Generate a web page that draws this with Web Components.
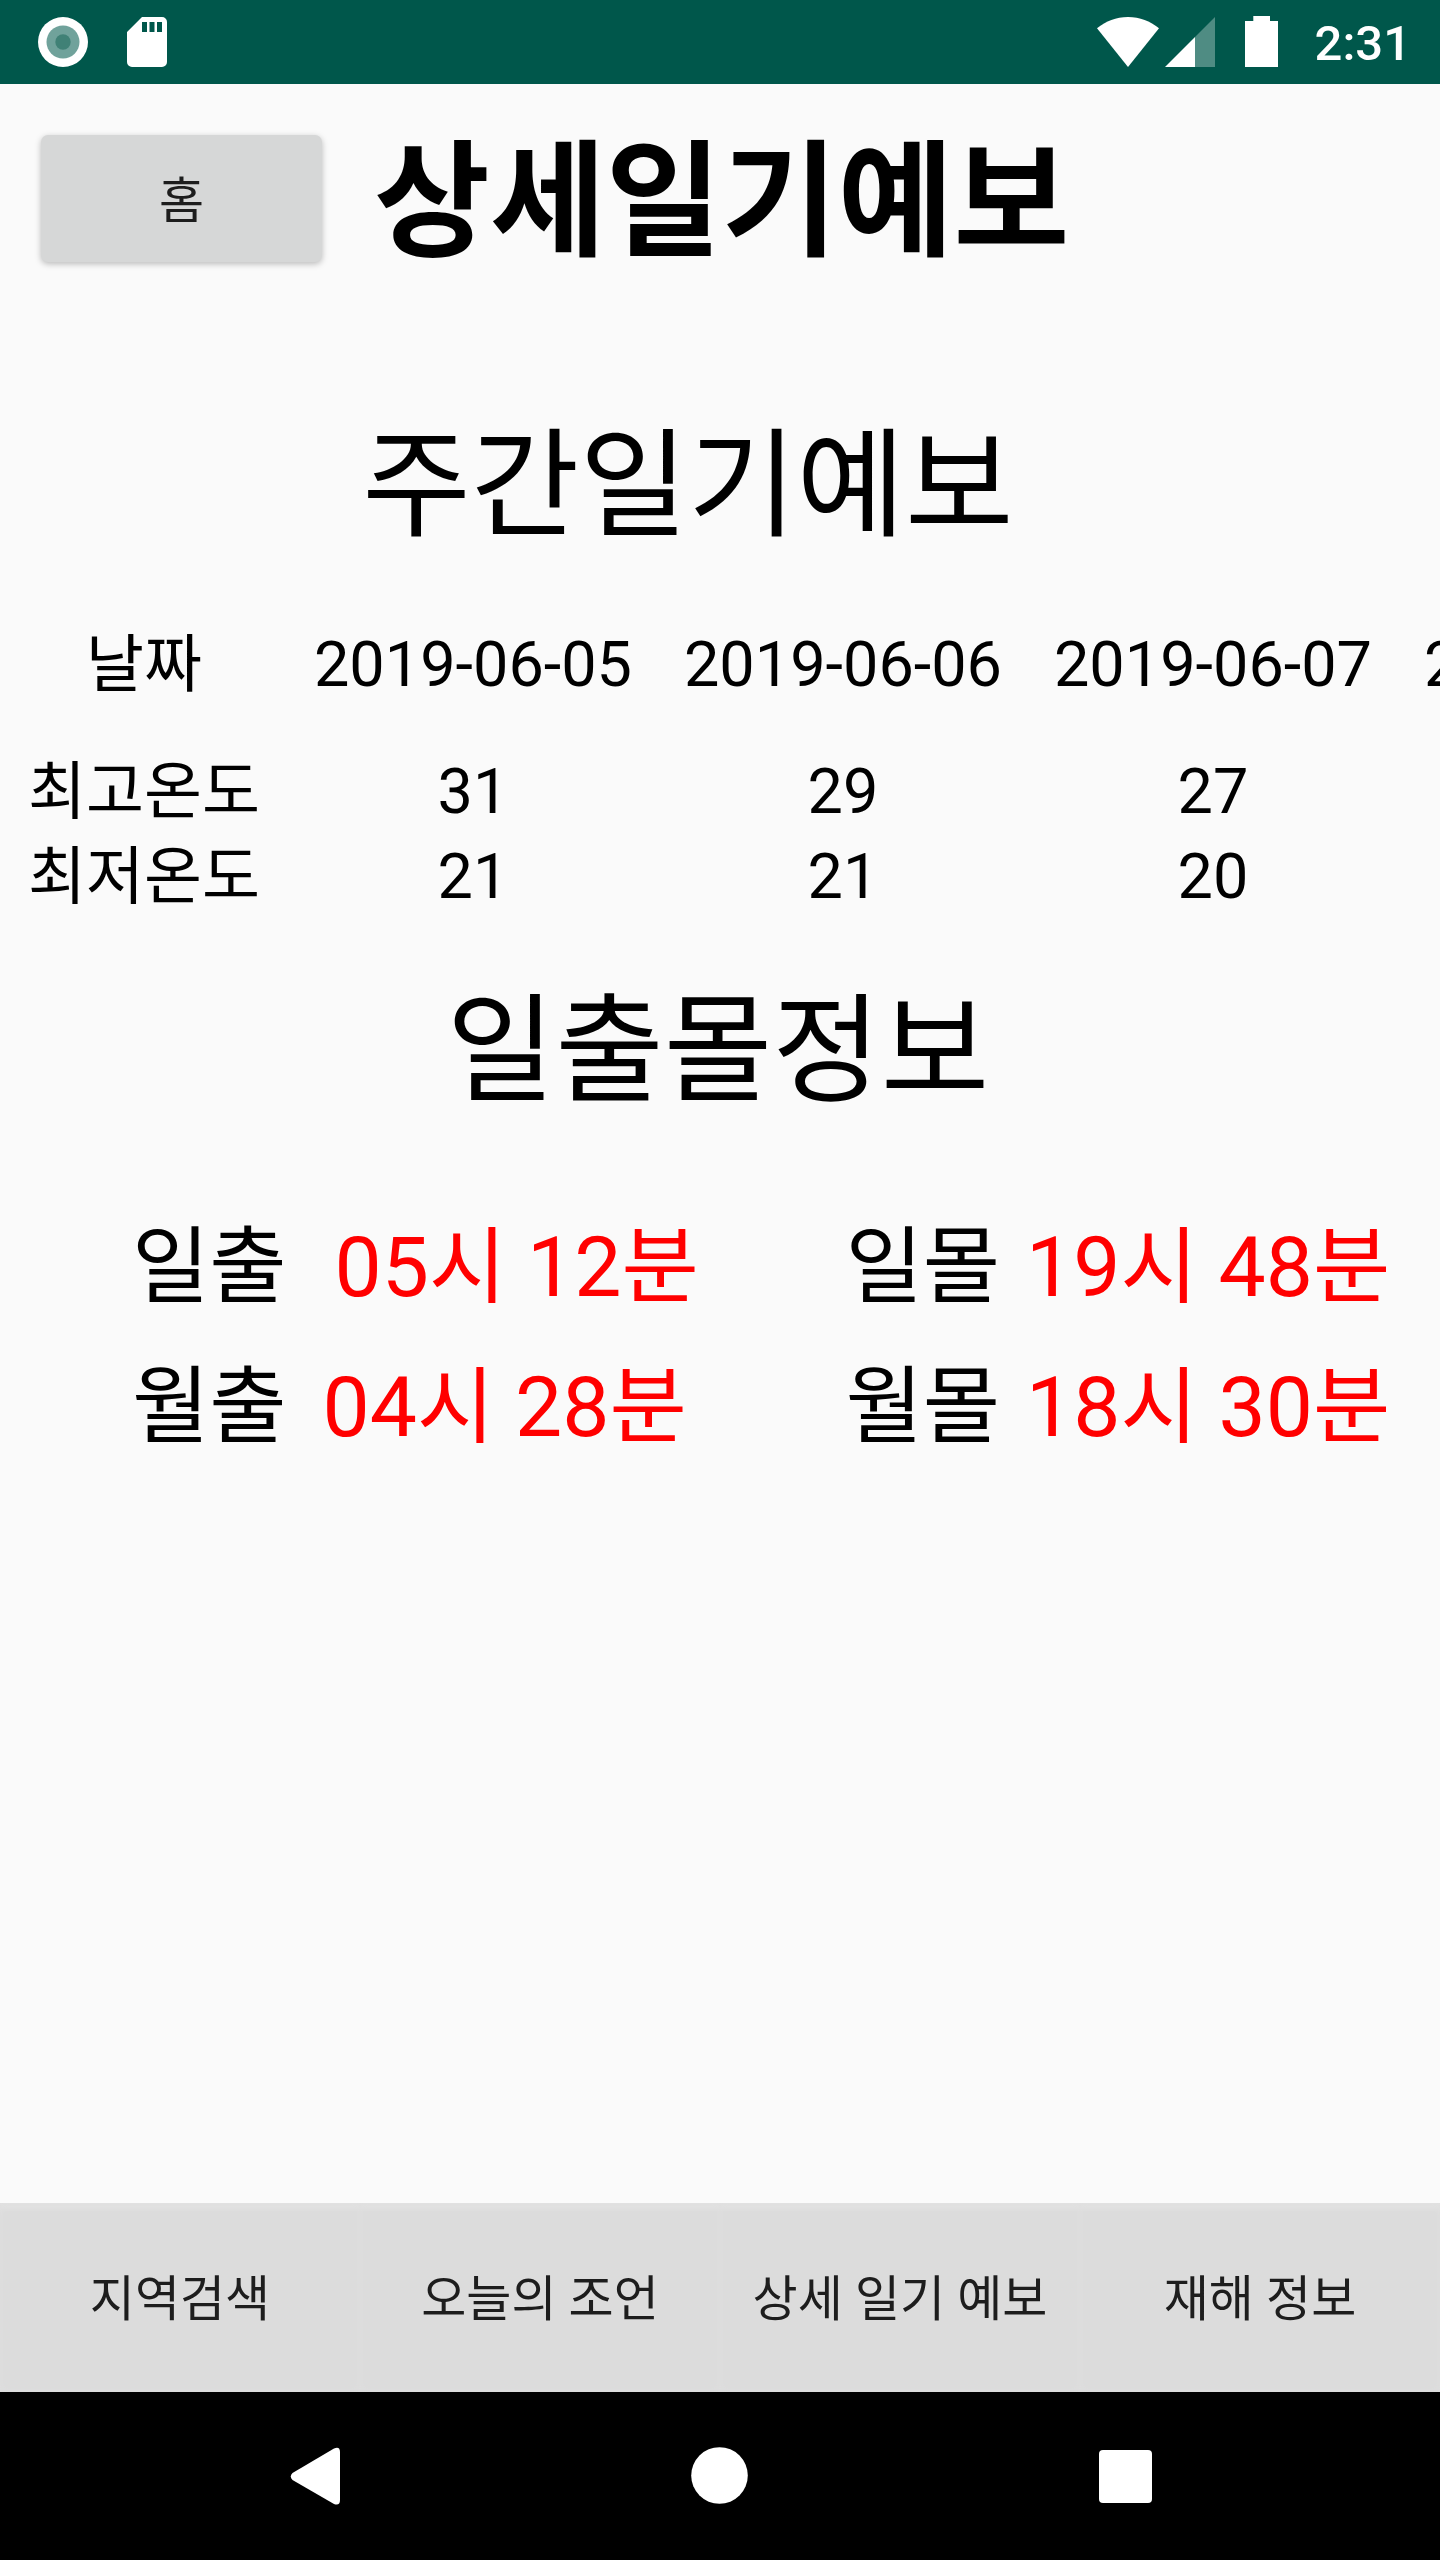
<!DOCTYPE html>
<html lang="ko">
<head>
<meta charset="utf-8">
<meta name="viewport" content="width=device-width, initial-scale=1">
<title>상세일기예보</title>
<style>
body { margin: 0; background: #fafafa; font-family: Roboto, "Noto Sans CJK KR", sans-serif; color: #000; }
</style>
</head>
<body>
<weather-app></weather-app>
<script>
const define = (name, html) => {
  const template = document.createElement('template');
  template.innerHTML = html;
  customElements.define(name, class extends HTMLElement {
    constructor() {
      super();
      this.attachShadow({ mode: 'open' }).append(template.content.cloneNode(true));
    }
  });
};

define('status-bar', `
<style>
:host { display: flex; justify-content: space-between; align-items: center; height: 84px; padding: 0 29px 0 38px; background: #00574b; color: #fff; }
.left, .right { display: flex; align-items: center; }
.left { gap: 39px; }
svg { display: block; }
.signal { margin-left: 6px; }
.battery { margin-left: 30px; }
time { margin-left: 37px; font-size: 49px; line-height: 58px; font-weight: 500; padding-top: 4px; }
</style>
<div class="left">
  <svg width="50" height="50" viewBox="0 0 50 50" aria-hidden="true"><circle cx="25" cy="25" r="25" fill="#fff"/><circle cx="25" cy="25" r="16.5" fill="#70a29b"/><circle cx="25" cy="25" r="7.7" fill="#408176"/></svg>
  <svg width="40" height="50" viewBox="0 0 40 50" aria-hidden="true"><path fill="#fff" fill-rule="evenodd" d="M15 0H35a5 5 0 0 1 5 5V45a5 5 0 0 1-5 5H5a5 5 0 0 1-5-5V15ZM15 5v10h5V5ZM22.500 5v10h5V5ZM30 5v10h5V5Z"/></svg>
</div>
<div class="right">
  <svg width="62" height="50" viewBox="0 0 62 50" aria-hidden="true"><path fill="#fff" d="M31 50 0 11.300C9 4 19 0 31 0s22 4 31 11.300Z"/></svg>
  <svg class="signal" width="50" height="50" viewBox="0 0 50 50" aria-hidden="true"><path fill="#4f8c83" d="M30 20 50 0V50H30Z"/><path fill="#fff" d="M0 50 30 20V50Z"/></svg>
  <svg class="battery" width="33" height="52" viewBox="0 0 33 52" aria-hidden="true"><path fill="#fff" d="M8.300 0H25V5h8V51H0V5H8.300Z"/></svg>
  <time>2:31</time>
</div>`);

define('home-button', `
<style>
:host { display: block; }
button { display: block; width: 281px; height: 127px; padding: 6px 0 0; border: 0; border-radius: 7px; background: #d6d7d7; color: #1d1d1d; font: inherit; font-size: 49px; line-height: 58px; box-shadow: 0 2px 6px rgba(0,0,0,.26); }
</style>
<button type="button"><slot></slot></button>`);

define('section-title', `
<style>
:host { display: block; }
h2 { margin: 0; font-size: 118px; line-height: 140px; font-weight: 400; text-align: center; }
</style>
<h2><slot></slot></h2>`);

define('weekly-forecast', `
<style>
:host { display: block; overflow: hidden; }
table { width: 1768px; table-layout: fixed; border-collapse: collapse; font-size: 63px; line-height: 85px; text-align: center; }
col.label { width: 288px; }
th, td { padding: 0; font-weight: 400; white-space: nowrap; }
thead th { padding-bottom: 42px; }
</style>
<table>
  <colgroup><col class="label"><col><col><col><col></colgroup>
  <thead><tr><th scope="col">날짜</th><th scope="col">2019-06-05</th><th scope="col">2019-06-06</th><th scope="col">2019-06-07</th><th scope="col">2019-06-08</th></tr></thead>
  <tbody>
    <tr><th scope="row">최고온도</th><td>31</td><td>29</td><td>27</td><td></td></tr>
    <tr><th scope="row">최저온도</th><td>21</td><td>21</td><td>20</td><td></td></tr>
  </tbody>
</table>`);

define('sky-time', `
<style>
:host { display: flex; gap: var(--gap, 26px); font-size: 84px; line-height: 140px; white-space: nowrap; }
.value { color: #f00; }
</style>
<span><slot name="label"></slot></span><span class="value"><slot></slot></span>`);

define('sky-times', `
<style>
:host { display: grid; grid-template-columns: 6fr 5fr; padding-left: 132px; }
.sunrise { --gap: 48px; }
.moonrise { --gap: 36px; }
</style>
<sky-time class="sunrise"><span slot="label">일출</span>05시 12분</sky-time>
<sky-time><span slot="label">일몰</span>19시 48분</sky-time>
<sky-time class="moonrise"><span slot="label">월출</span>04시 28분</sky-time>
<sky-time><span slot="label">월몰</span>18시 30분</sky-time>`);

define('tab-bar', `
<style>
:host { display: block; }
nav { display: grid; grid-template-columns: repeat(4, 1fr); height: 189px; background: #dcdcdc; box-shadow: inset 0 8px 6px -3px #e3e3e3; }
button { padding: 4px 0 0; border: 0; background: none; box-shadow: inset 0 0 6px #dfdfdf; color: #1d1d1d; font: inherit; font-size: 49px; line-height: 58px; white-space: nowrap; }
</style>
<nav>
  <button type="button">지역검색</button>
  <button type="button">오늘의 조언</button>
  <button type="button">상세 일기 예보</button>
  <button type="button">재해 정보</button>
</nav>`);

define('system-nav', `
<style>
:host { display: flex; height: 168px; padding: 0 111px; background: #000; }
button { flex: 1; display: flex; align-items: center; justify-content: center; padding: 0; border: 0; background: none; }
svg { fill: #fff; }
</style>
<button type="button" aria-label="뒤로"><svg width="58" height="58" viewBox="0 0 58 58"><path d="M7.500 26 49 1.500Q55 -1 55 5V53Q55 59 49 57L7.500 33Q4 29.500 7.500 26Z"/></svg></button>
<button type="button" aria-label="홈 화면"><svg width="58" height="58" viewBox="0 0 58 58"><circle cx="28.500" cy="28.500" r="28.300"/></svg></button>
<button type="button" aria-label="최근 앱"><svg width="58" height="58" viewBox="0 0 58 58"><rect x="2" y="3" width="53" height="53" rx="4"/></svg></button>`);

define('weather-app', `
<style>
:host { display: flex; flex-direction: column; min-height: 100vh; }
main { flex: 1; }
header { display: flex; align-items: flex-start; gap: 52px; padding: 51px 41px 0; }
h1 { margin: 0; padding-top: 5px; font-size: 126px; line-height: 127px; font-weight: 700; white-space: nowrap; }
.weekly { margin-top: 150px; padding-right: 64px; }
weekly-forecast { margin-top: 65px; }
.sky { margin-top: 63px; padding-right: 4px; }
sky-times { margin-top: 76px; }
</style>
<status-bar></status-bar>
<main>
  <header><home-button>홈</home-button><h1>상세일기예보</h1></header>
  <section-title class="weekly">주간일기예보</section-title>
  <weekly-forecast></weekly-forecast>
  <section-title class="sky">일출몰정보</section-title>
  <sky-times></sky-times>
</main>
<tab-bar></tab-bar>
<system-nav></system-nav>`);
</script>
</body>
</html>
